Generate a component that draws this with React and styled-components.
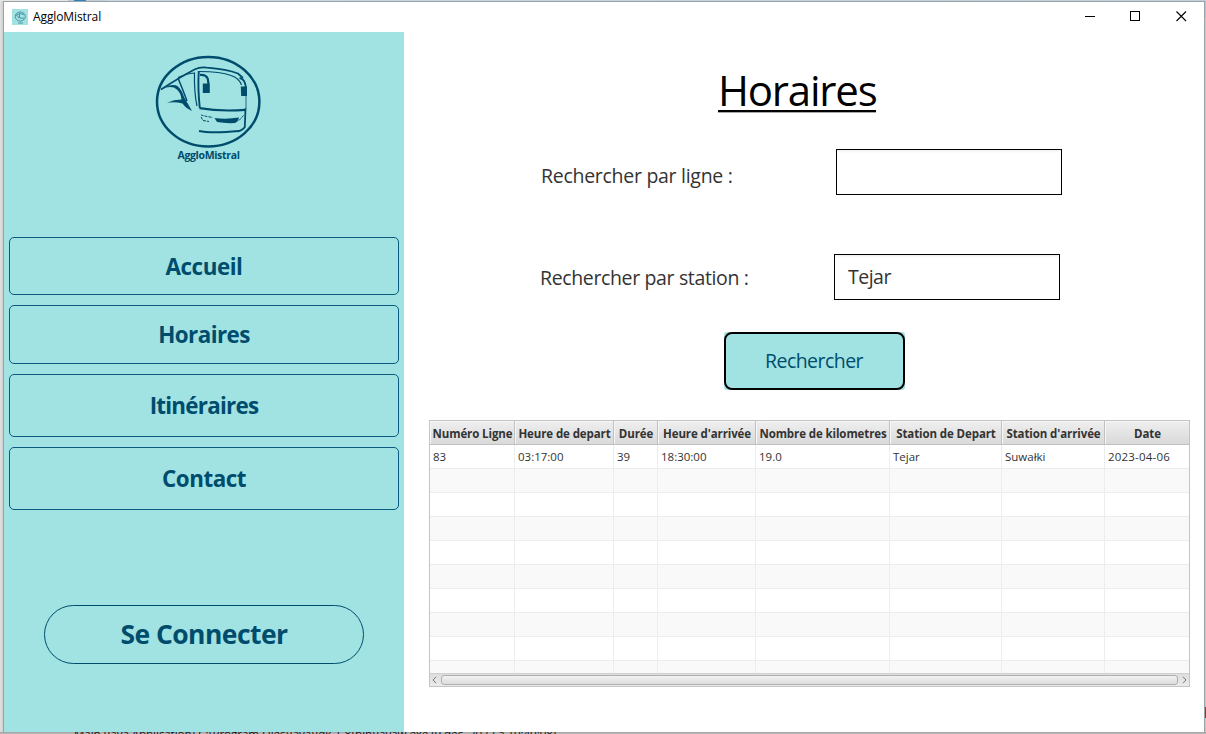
import React from "react";
import styled, { createGlobalStyle } from "styled-components";

const teal = "#a0e3e2";
const navy = "#004c6d";

const Global = createGlobalStyle`
  * { box-sizing: border-box; }
  body { margin: 0; background: #dcdcdc; font-family: "Open Sans", "Noto Sans", sans-serif; overflow: hidden; }
  button, input { font-family: inherit; margin: 0; }
`;

const Desktop = styled.div`
  width: 1206px;
  height: 734px;
  display: grid;
  grid-template-rows: 1px 731px 2px;
  grid-template-columns: 3px 1202px 1px;
  overflow: hidden;
`;
const TopEdge = styled.div`
  grid-column: 1 / -1;
  background: linear-gradient(90deg, #e6e6e6 68px, #bfc8cf 68px, #bfc8cf 74px, #2f83bd 74px, #2f83bd 86px, #c3ced7 86px, #c3ced7 106px, #c9d8e6 106px, #c3d0da 100%);
`;
const LeftEdge = styled.div`
  background: linear-gradient(90deg, #e2e2e2, #cfcfcf);
`;
const RightEdge = styled.div`
  background: linear-gradient(180deg, #b4c4d6 16px, #c8c8c8 16px, #c8c8c8 706px, #c02030 706px, #c02030 717px, #c8c8c8 717px);
`;
const BottomEdge = styled.div`
  grid-column: 1 / -1;
  height: 2px;
  padding-left: 74px;
  overflow: hidden;
  background: linear-gradient(180deg, #a6a6a6 1px, #b8b8b8 1px);
`;
const ConsoleTitle = styled.div`
  margin-top: -5px;
  font-size: 11.6px;
  line-height: 14px;
  letter-spacing: -0.07px;
  white-space: nowrap;
  color: #111;
`;

const Window = styled.div`
  display: flex;
  flex-direction: column;
  background: #fff;
  border: 1px solid #9aa3a8;
  border-bottom: 0;
`;
const TitleBar = styled.header`
  height: 30px;
  flex: none;
  display: flex;
  align-items: center;
  padding-left: 8px;
`;
const AppName = styled.span`
  flex: 1;
  margin-left: 5px;
  padding-bottom: 1px;
  font-size: 12px;
  letter-spacing: -0.1px;
  color: #000;
`;
const WindowControl = styled.span`
  width: 46px;
  height: 30px;
  display: grid;
  place-items: center;
  padding-bottom: 1px;
`;
const Main = styled.div`
  flex: 1;
  display: flex;
`;

const Sidebar = styled.nav`
  width: 400px;
  display: flex;
  flex-direction: column;
  align-items: center;
  background: ${teal};
`;
const Brand = styled.div`
  width: 110px;
  height: 205px;
  padding-top: 23px;
  display: flex;
  flex-direction: column;
  align-items: center;
  margin-left: 8px;
`;
const BrandName = styled.span`
  margin-left: 1px;
  font-size: 10.5px;
  line-height: 14px;
  font-weight: 700;
  letter-spacing: -0.33px;
  color: ${navy};
`;
const NavList = styled.div`
  width: 390px;
  height: 273px;
  display: flex;
  flex-direction: column;
  justify-content: space-between;
`;
const NavButton = styled.button`
  height: ${(p) => p.$height}px;
  padding: 0;
  border: 1px solid #0b5a80;
  border-radius: 5px;
  background: transparent;
  color: ${navy};
  font-size: 22.4px;
  font-weight: 700;
  letter-spacing: ${(p) => p.$tracking}px;
`;
const LoginButton = styled.button`
  width: 320px;
  height: 59px;
  margin-top: 95px;
  padding: 0 0 1px;
  border: 1px solid ${navy};
  border-radius: 30px;
  background: transparent;
  color: ${navy};
  font-size: 26.5px;
  font-weight: 700;
  letter-spacing: -0.55px;
`;

const Content = styled.main`
  width: 800px;
  padding-left: 25px;
  display: flex;
  flex-direction: column;
`;
const Title = styled.h1`
  width: 158px;
  height: 49px;
  margin: 31px 0 0 289px;
  border-bottom: 2px solid #000;
  box-shadow: 0 1px 0 #aaa, 0 -1px 0 transparent;
  font-size: 42px;
  line-height: 53px;
  font-weight: 400;
  letter-spacing: -1.2px;
  white-space: nowrap;
  color: #000;
`;
const Field = styled.label`
  display: flex;
  align-items: center;
  height: 46px;
  margin: ${(p) => p.$top}px 0 0 ${(p) => p.$left}px;
`;
const FieldLabel = styled.span`
  width: ${(p) => p.$width}px;
  padding-top: ${(p) => p.$drop}px;
  font-size: 19.5px;
  letter-spacing: ${(p) => p.$tracking}px;
  color: #333;
`;
const Input = styled.input`
  width: 226px;
  height: 46px;
  padding: 0 13px 2px;
  border: 1px solid #000;
  border-radius: 0;
  background: linear-gradient(180deg, #f1f1f1, #fff 3px);
  color: #333;
  font-size: 19.5px;
  letter-spacing: -0.5px;
  outline: none;
`;
const SearchButton = styled.button`
  width: 181px;
  height: 58px;
  margin: 32px 0 0 295px;
  padding: 0;
  border: 0;
  border-radius: 3px;
  display: grid;
  background: ${teal};
`;
const SearchFace = styled.span`
  display: grid;
  place-items: center;
  padding: 0 1px 2px 0;
  border: 2px solid #000;
  border-radius: 8px;
  color: ${navy};
  font-size: 19.5px;
  letter-spacing: -0.55px;
`;

const Table = styled.section`
  width: 761px;
  height: 267px;
  margin-top: 30px;
  display: flex;
  flex-direction: column;
  border: 1px solid #c4c4c4;
`;
const columns = "85px 99px 44px 98px 134px 112px 103px 84px";
const HeaderRow = styled.div`
  height: 24px;
  flex: none;
  display: grid;
  grid-template-columns: ${columns};
  border-bottom: 1px solid #c0c0c0;
`;
const HeaderCell = styled.div`
  height: 23px;
  padding-left: 1px;
  text-align: center;
  border-right: 1px solid #c0c0c0;
  box-shadow: inset 1px 1px 0 #f7f7f7;
  background: linear-gradient(180deg, #efefef, #d9d9d9);
  font-size: 11.5px;
  line-height: 25px;
  font-weight: 700;
  letter-spacing: -0.1px;
  white-space: nowrap;
  color: #333;
  &:last-child { border-right: 0; }
`;
const Rows = styled.div`
  height: 228px;
  overflow: hidden;
`;
const Row = styled.div`
  height: 24px;
  display: grid;
  grid-template-columns: ${columns};
  background: ${(p) => (p.$odd ? "#f9f9f9" : "#fff")};
`;
const Cell = styled.div`
  padding-left: 3px;
  border-right: 1px solid #ededed;
  border-bottom: 1px solid #ededed;
  font-size: 11.5px;
  line-height: 23px;
  letter-spacing: ${(p) => p.$tracking || 0}px;
  white-space: nowrap;
  color: #333;
  &:last-child { border-right: 0; }
`;
const ScrollBar = styled.div`
  height: 13px;
  display: flex;
  align-items: center;
  border-top: 1px solid #d0d0d0;
  background: linear-gradient(180deg, #dedede, #ebebeb);
`;
const ScrollArrow = styled.span`
  width: 11px;
  display: grid;
  place-items: center;
  padding-right: ${(p) => (p.$back ? 3 : 0)}px;
  padding-left: ${(p) => (p.$back ? 0 : 2)}px;
`;
const ScrollThumb = styled.span`
  width: 737px;
  height: 10px;
  border: 1px solid #b0b0b0;
  border-radius: 3px;
  background: linear-gradient(180deg, #f2f2f2, #dcdcdc);
`;

function BusLogo() {
  return (
    <svg width="106" height="93" viewBox="155 55 106 93" fill="none" stroke={navy}>
      <ellipse cx="208.2" cy="101.7" rx="51.2" ry="44.8" strokeWidth="2.5" />
      <path d="M161 89.5 Q180 77 195 69.2 Q200 66.8 207 67.6 Q227 69 238 73.5 L243 78" strokeWidth="1.7" />
      <path d="M178 77.5 Q187 73.5 194.5 73 Q194 92 197 106" strokeWidth="1.2" />
      <path d="M198.8 71 Q197.6 88 199.8 108" strokeWidth="1.9" />
      <path d="M199 71.5 Q221 71.5 231 75.5 Q239 78 241.5 85" strokeWidth="1.1" />
      <path d="M246 96 V109" strokeWidth="0.8" />
      <path d="M200 74.8 Q206.5 74.5 207.8 79 L208.5 84" strokeWidth="2.2" />
      <path d="M202.8 83.5 H209.8 V93 H202.8 Z M240.8 86.5 H247 V96 H241.2 Z" fill={navy} stroke="none" />
      <path d="M239.5 78 Q245 78.5 246 88" strokeWidth="1.8" />
      <path d="M161 89.5 Q172 83 177.5 86 Q182 90 184 97 L192 111 Q186 108.5 182.5 103.5 Q175 101.5 167 102.8 Q174 99.5 181.5 99.5 Q181 91.5 174 87.5 Q168 86 161 89.5 Z" fill={navy} stroke="none" />
      <path d="M178 78 Q183 90 187 101" strokeWidth="1.5" />
      <path d="M199.5 108.2 Q221 111.8 245.5 109.8" strokeWidth="2.2" />
      <path d="M245.5 108.5 L244.8 127 Q243 130 238 131.3" strokeWidth="1.8" />
      <path d="M201 117 L203 120.5 L209 121.5 M201 115 Q206 116.5 213 117.5 M239 120.5 L243.5 115.5" strokeWidth="1" strokeDasharray="3 1" />
      <path d="M214.5 118 Q227 119.5 239 117.5 Q238 122 235 123 Q225 123.5 217 122 Z" fill={navy} stroke="none" />
      <path d="M199 131 Q211 133.5 239 131" strokeWidth="1.8" />
    </svg>
  );
}

function AppIcon() {
  return (
    <svg width="16" height="16" viewBox="0 0 16 16" fill="none" stroke="#4b91a5">
      <rect width="16" height="16" fill={teal} stroke="none" />
      <ellipse cx="8.3" cy="7.5" rx="5" ry="4.5" />
      <path d="M4 6.5 L7.5 4.5 L12 5.5 M7.5 5 V9 L12 9.2 M5 6.5 L7 9 M6 14 H11" />
    </svg>
  );
}

const nav = [
  ["Accueil", 58, -0.45],
  ["Horaires", 59, -0.55],
  ["Itinéraires", 63, -0.75],
  ["Contact", 63, -0.5],
];
const headers = [
  "Numéro Ligne", "Heure de depart", "Durée", "Heure d'arrivée",
  "Nombre de kilometres", "Station de Depart", "Station d'arrivée", "Date",
];
const departure = ["83", "03:17:00", "39", "18:30:00", "19.0", "Tejar", "Suwałki", "2023-04-06"];
const rows = [departure, ...Array.from({ length: 9 }, () => headers.map(() => ""))];

export default function App() {
  return (
    <Desktop>
      <Global />
      <TopEdge />
      <LeftEdge />
      <Window>
        <TitleBar>
          <AppIcon />
          <AppName>AggloMistral</AppName>
          <WindowControl>
            <svg width="11" height="11" shapeRendering="crispEdges"><path d="M0.5 5.5H10.5" stroke="#000" /></svg>
          </WindowControl>
          <WindowControl>
            <svg width="11" height="11" shapeRendering="crispEdges"><path d="M.5 .5H9.5V9.5H.5Z" fill="none" stroke="#000" /></svg>
          </WindowControl>
          <WindowControl>
            <svg width="11" height="11"><path d="M.5 .5L10 10M10 .5L.5 10" stroke="#000" strokeWidth="1.1" /></svg>
          </WindowControl>
        </TitleBar>
        <Main>
          <Sidebar>
            <Brand>
              <BusLogo />
              <BrandName>AggloMistral</BrandName>
            </Brand>
            <NavList>
              {nav.map(([name, height, tracking]) => (
                <NavButton key={name} $height={height} $tracking={tracking}>{name}</NavButton>
              ))}
            </NavList>
            <LoginButton>Se Connecter</LoginButton>
          </Sidebar>
          <Content>
            <Title>Horaires</Title>
            <Field $top={37} $left={112}>
              <FieldLabel $width={295} $drop={7} $tracking={-0.28}>Rechercher par ligne :</FieldLabel>
              <Input defaultValue="" />
            </Field>
            <Field $top={59} $left={111}>
              <FieldLabel $width={294} $drop={1} $tracking={-0.36}>Rechercher par station :</FieldLabel>
              <Input defaultValue="Tejar" />
            </Field>
            <SearchButton>
              <SearchFace>Rechercher</SearchFace>
            </SearchButton>
            <Table>
              <HeaderRow>
                {headers.map((h) => <HeaderCell key={h}>{h}</HeaderCell>)}
              </HeaderRow>
              <Rows>
                {rows.map((row, i) => (
                  <Row key={i} $odd={i % 2 === 1}>
                    {row.map((value, j) => <Cell key={j} $tracking={j === 7 ? 0.2 : 0}>{value}</Cell>)}
                  </Row>
                ))}
              </Rows>
              <ScrollBar>
                <ScrollArrow $back>
                  <svg width="6" height="8" fill="none" stroke="#777"><path d="M5 .8L2 4L5 7.2" /></svg>
                </ScrollArrow>
                <ScrollThumb />
                <ScrollArrow>
                  <svg width="6" height="8" fill="none" stroke="#777"><path d="M1 .8L4 4L1 7.2" /></svg>
                </ScrollArrow>
              </ScrollBar>
            </Table>
          </Content>
        </Main>
      </Window>
      <RightEdge />
      <BottomEdge>
        <ConsoleTitle>{"Main [Java Application] C:\\Program Files\\Java\\jdk-1.8\\bin\\javaw.exe  (9 déc. 2022 à 10:40:08)"}</ConsoleTitle>
      </BottomEdge>
    </Desktop>
  );
}
